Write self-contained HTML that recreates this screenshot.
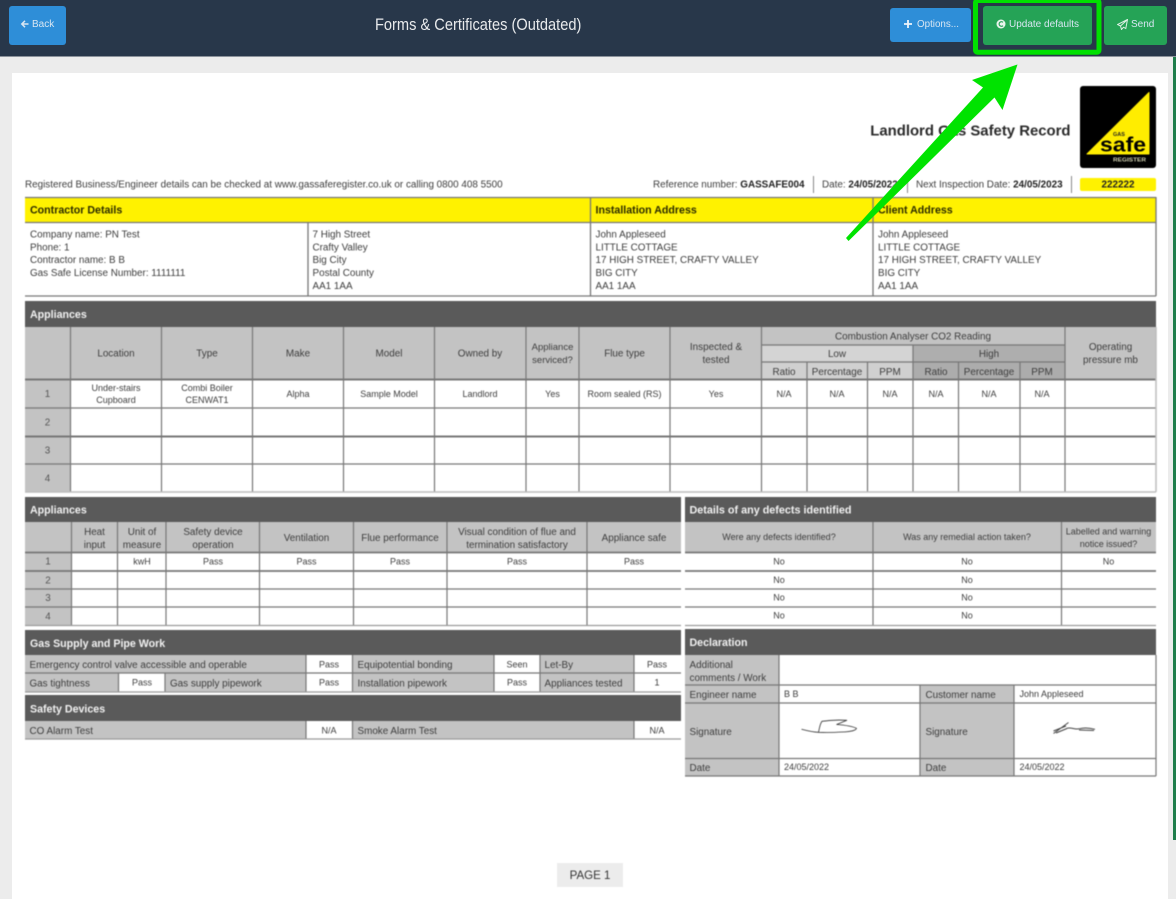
<!DOCTYPE html>
<html lang="en"><head><meta charset="utf-8"><title>Forms &amp; Certificates (Outdated)</title>
<style>
html,body{margin:0;padding:0;width:1176px;height:899px;overflow:hidden;background:#ececec;font-family:"Liberation Sans",sans-serif}
#top{position:absolute;left:0;top:0;width:1176px;height:56px;background:#28374a;border-bottom:1px solid #8b929b}
#title{position:absolute;left:375px;top:14px;width:206px;white-space:nowrap;color:#e8eaec;font-size:17px;line-height:21px;transform-origin:0 50%;transform:scaleX(.86);filter:blur(.25px)}
.btn{position:absolute;box-sizing:border-box;border-radius:3px;color:#d8e6f2;font-size:10px;line-height:12px;white-space:nowrap}
.btn svg{position:absolute}.btn span{position:absolute;top:12.5px;filter:blur(.25px)}
#page{position:absolute;left:12px;top:73px;width:1156px;height:826px;background:#fff}
#scroll{position:absolute;left:1173px;top:57px;width:2.5px;height:783px;background:#1f7d4b}
#form{position:absolute;left:0;top:0;filter:blur(.4px)}
#form text{font-family:"Liberation Sans",sans-serif;font-size:9.9px;fill:#3d3d3d}
#form .c{text-anchor:middle}
#form .s{font-size:9px}
#form .h{font-size:10.65px;font-weight:bold;fill:#f2f2f2}
#form .y{font-size:10.65px;font-weight:bold;fill:#2b2b00}
#form .b{font-weight:bold;fill:#222}
#form .n{fill:#555}
#over{position:absolute;left:0;top:0;pointer-events:none}
</style></head><body>
<div id="page"></div><div id="scroll"></div>
<svg id="form" width="1176" height="899" viewBox="0 0 1176 899" xmlns="http://www.w3.org/2000/svg">
<!-- title + logo -->
<text x="1070.5" y="135.5" text-anchor="end" style="font-size:14.9px;font-weight:bold;fill:#2a2a2a">Landlord Gas Safety Record</text>
<rect x="1080" y="86" width="76" height="82" rx="3" fill="#000"/>
<path d="M1149 92.500V154H1087Z" fill="#ffed00" stroke="#ffed00" stroke-width="1" stroke-linejoin="round"/>
<text x="1119" y="136" class="c" style="font-size:5.500px;font-weight:bold;fill:#222">GAS</text>
<text x="1123" y="151.500" class="c" textLength="46" lengthAdjust="spacingAndGlyphs" style="font-size:20px;font-weight:bold;fill:#000">safe</text>
<text x="1129.500" y="161.500" class="c" textLength="33" lengthAdjust="spacingAndGlyphs" style="font-size:5.500px;font-weight:bold;fill:#d0d0b0">REGISTER</text>
<!-- reference row -->
<text x="25" y="187.500">Registered Business/Engineer details can be checked at www.gassaferegister.co.uk or calling 0800 408 5500</text>
<text x="653" y="187.500">Reference number: <tspan style="font-weight:bold;fill:#222">GASSAFE004</tspan></text>
<text x="822" y="187.500">Date: <tspan style="font-weight:bold;fill:#222">24/05/2022</tspan></text>
<text x="916" y="187.500">Next Inspection Date: <tspan style="font-weight:bold;fill:#222">24/05/2023</tspan></text>
<path d="M813.500 176V193M907.500 176V193M1071.500 176V193" stroke="#8a8a8a" stroke-width="1"/>
<rect x="1080" y="178" width="76" height="13" rx="2" fill="#fff200"/>
<text x="1118" y="187.500" class="c" style="font-weight:bold;fill:#222">222222</text>
<!-- contractor block -->
<rect x="25" y="198" width="1131" height="24" fill="#fff200"/>
<path d="M25 197.500H1156M25 222.500H1156M25 296H1156M590.500 197V296M873 197V296M308 222V296M1156 197V296" stroke="#777" stroke-width="1.300" fill="none"/>
<text x="30" y="213.500" class="y">Contractor Details</text>
<text x="595.500" y="213.500" class="y">Installation Address</text>
<text x="878" y="213.500" class="y">Client Address</text>
<text x="30" y="237.500">Company name: PN Test</text>
<text x="30" y="250.500">Phone: 1</text>
<text x="30" y="263">Contractor name: B B</text>
<text x="30" y="276">Gas Safe License Number: 1111111</text>
<text x="312.500" y="237.500">7 High Street</text>
<text x="312.500" y="250.500">Crafty Valley</text>
<text x="312.500" y="263">Big City</text>
<text x="312.500" y="276">Postal County</text>
<text x="312.500" y="289">AA1 1AA</text>
<text x="595.500" y="237.500">John Appleseed</text>
<text x="595.500" y="250.500">LITTLE COTTAGE</text>
<text x="595.500" y="263">17 HIGH STREET, CRAFTY VALLEY</text>
<text x="595.500" y="276">BIG CITY</text>
<text x="595.500" y="289">AA1 1AA</text>
<text x="878" y="237.500">John Appleseed</text>
<text x="878" y="250.500">LITTLE COTTAGE</text>
<text x="878" y="263">17 HIGH STREET, CRAFTY VALLEY</text>
<text x="878" y="276">BIG CITY</text>
<text x="878" y="289">AA1 1AA</text>
<!-- appliances 1 -->
<rect x="25" y="301" width="1131" height="26" fill="#5a5a5a"/>
<text x="30" y="318" class="h">Appliances</text>
<rect x="25" y="327" width="1131" height="52" fill="#c3c3c3"/>
<rect x="25" y="379" width="45" height="113" fill="#c3c3c3"/>
<rect x="761" y="345" width="152" height="17" fill="#d4d4d4"/>
<rect x="761" y="362" width="152" height="17" fill="#d0d0d0"/>
<rect x="913" y="345" width="152" height="17" fill="#aeaeae"/>
<rect x="913" y="362" width="152" height="17" fill="#acacac"/>
<path d="M70.500 327V492M161.500 327V492M252.500 327V492M343.500 327V492M434.500 327V492M526 327V492M579 327V492M670 327V492M761.500 327V492M807 362V492M867.500 362V492M913 345V492M958.500 362V492M1020 362V492M1065 327V492M761 345H1065M761 362H1065M25 408H1156M25 464H1156" stroke="#777" stroke-width="1.200" fill="none"/>
<path d="M25 379.500H1156M25 436.500H1156" stroke="#777" stroke-width="2" fill="none"/>
<path d="M25 492H1156M1156 327V492" stroke="#bdbdbd" stroke-width="1.500" fill="none"/>
<text x="116" y="356.500" class="c">Location</text>
<text x="207" y="356.500" class="c">Type</text>
<text x="298" y="356.500" class="c">Make</text>
<text x="389" y="356.500" class="c">Model</text>
<text x="480" y="356.500" class="c">Owned by</text>
<text x="552.500" y="350" class="c" style="font-size:9.500px">Appliance</text>
<text x="552.500" y="363" class="c" style="font-size:9.500px">serviced?</text>
<text x="624.500" y="356.500" class="c">Flue type</text>
<text x="716" y="350" class="c">Inspected &amp;</text>
<text x="716" y="363" class="c">tested</text>
<text x="913" y="339.500" class="c">Combustion Analyser CO2 Reading</text>
<text x="837" y="357" class="c">Low</text>
<text x="989" y="357" class="c">High</text>
<text x="784" y="375" class="c">Ratio</text>
<text x="837" y="375" class="c">Percentage</text>
<text x="890" y="375" class="c">PPM</text>
<text x="936" y="375" class="c">Ratio</text>
<text x="989" y="375" class="c">Percentage</text>
<text x="1042" y="375" class="c">PPM</text>
<text x="1110.500" y="350" class="c">Operating</text>
<text x="1110.500" y="363" class="c">pressure mb</text>
<text x="47.500" y="397" class="c n">1</text>
<text x="47.500" y="425.500" class="c n">2</text>
<text x="47.500" y="453.500" class="c n">3</text>
<text x="47.500" y="481.500" class="c n">4</text>
<text x="116" y="391" class="c s">Under-stairs</text>
<text x="116" y="403" class="c s">Cupboard</text>
<text x="207" y="391" class="c s">Combi Boiler</text>
<text x="207" y="403" class="c s">CENWAT1</text>
<text x="298" y="397" class="c s">Alpha</text>
<text x="389" y="397" class="c s">Sample Model</text>
<text x="480" y="397" class="c s">Landlord</text>
<text x="552.500" y="397" class="c s">Yes</text>
<text x="624.500" y="397" class="c s">Room sealed (RS)</text>
<text x="716" y="397" class="c s">Yes</text>
<text x="784" y="397" class="c s">N/A</text>
<text x="837" y="397" class="c s">N/A</text>
<text x="890" y="397" class="c s">N/A</text>
<text x="936" y="397" class="c s">N/A</text>
<text x="989" y="397" class="c s">N/A</text>
<text x="1042" y="397" class="c s">N/A</text>
<!-- appliances 2 -->
<rect x="25" y="497" width="656" height="25" fill="#5a5a5a"/>
<text x="30" y="513.500" class="h">Appliances</text>
<rect x="25" y="522" width="656" height="30" fill="#c3c3c3"/>
<rect x="25" y="552" width="46.500" height="73" fill="#c3c3c3"/>
<path d="M71.500 522V625M117.500 522V625M166 522V625M259.500 522V625M353.500 522V625M447 522V625M587 522V625M25 589H681M25 607H681" stroke="#777" stroke-width="1.200" fill="none"/>
<path d="M25 552.500H681M25 571H681" stroke="#777" stroke-width="1.800" fill="none"/>
<path d="M25 625.500H681" stroke="#9a9a9a" stroke-width="1.200"/>
<text x="94.500" y="535" class="c">Heat</text><text x="94.500" y="548" class="c">input</text>
<text x="142" y="535" class="c">Unit of</text><text x="142" y="548" class="c">measure</text>
<text x="213" y="535" class="c">Safety device</text><text x="213" y="548" class="c">operation</text>
<text x="306.500" y="541" class="c">Ventilation</text>
<text x="400" y="541" class="c">Flue performance</text>
<text x="517" y="535" class="c">Visual condition of flue and</text><text x="517" y="548" class="c">termination satisfactory</text>
<text x="634" y="541" class="c">Appliance safe</text>
<text x="48" y="564.500" class="c n">1</text><text x="48" y="583.500" class="c n">2</text><text x="48" y="601" class="c n">3</text><text x="48" y="619.500" class="c n">4</text>
<text x="142" y="564.500" class="c s">kwH</text>
<text x="213" y="564.500" class="c s">Pass</text>
<text x="306.500" y="564.500" class="c s">Pass</text>
<text x="400" y="564.500" class="c s">Pass</text>
<text x="517" y="564.500" class="c s">Pass</text>
<text x="634" y="564.500" class="c s">Pass</text>
<!-- defects -->
<rect x="685" y="497" width="471" height="25" fill="#5a5a5a"/>
<text x="689.500" y="513.500" class="h" style="font-size:10.800px">Details of any defects identified</text>
<rect x="685" y="522" width="471" height="30" fill="#c3c3c3"/>
<path d="M873 522V625M1061.500 522V625M685 589H1156M685 607H1156" stroke="#777" stroke-width="1.200" fill="none"/>
<path d="M685 552.500H1156M685 571H1156" stroke="#777" stroke-width="1.800" fill="none"/>
<path d="M685 625.500H1156" stroke="#9a9a9a" stroke-width="1.200"/>
<text x="779" y="540" class="c s">Were any defects identified?</text>
<text x="967" y="540" class="c s">Was any remedial action taken?</text>
<text x="1108.500" y="534.500" class="c s">Labelled and warning</text>
<text x="1108.500" y="547" class="c s">notice issued?</text>
<text x="779" y="564.500" class="c s">No</text><text x="967" y="564.500" class="c s">No</text><text x="1108.500" y="564.500" class="c s">No</text>
<text x="779" y="583" class="c s">No</text><text x="967" y="583" class="c s">No</text>
<text x="779" y="600.500" class="c s">No</text><text x="967" y="600.500" class="c s">No</text>
<text x="779" y="618.500" class="c s">No</text><text x="967" y="618.500" class="c s">No</text>
<!-- gas supply -->
<rect x="25" y="630" width="656" height="25" fill="#5a5a5a"/>
<text x="30" y="647" class="h">Gas Supply and Pipe Work</text>
<rect x="25" y="655" width="656" height="37" fill="#c3c3c3"/>
<path d="M306 655h46.500v18H306ZM494 655h46v18h-46ZM634 655h47v18h-47ZM118.500 673.500h46.500v18h-46.500ZM306 673.500h46.500v18H306ZM494 673.500h46v18h-46ZM634 673.500h47v18h-47Z" fill="#fff"/>
<path d="M25 673H681M306 655V692M352.500 655V692M494 655V692M540 655V692M634 655V692M118.500 673V692M165 673V692" stroke="#777" stroke-width="1.200" fill="none"/>
<path d="M25 692H681" stroke="#9a9a9a" stroke-width="1.200"/>
<text x="29.500" y="668">Emergency control valve accessible and operable</text>
<text x="329" y="667.500" class="c s">Pass</text>
<text x="357.500" y="668">Equipotential bonding</text>
<text x="517" y="667.500" class="c s">Seen</text>
<text x="544.500" y="668">Let-By</text>
<text x="657" y="667.500" class="c s">Pass</text>
<text x="29.500" y="686.500">Gas tightness</text>
<text x="142" y="685.500" class="c s">Pass</text>
<text x="170" y="686.500">Gas supply pipework</text>
<text x="329" y="685.500" class="c s">Pass</text>
<text x="357.500" y="686.500">Installation pipework</text>
<text x="517" y="685.500" class="c s">Pass</text>
<text x="544.500" y="686.500">Appliances tested</text>
<text x="657" y="685.500" class="c s">1</text>
<!-- safety -->
<rect x="25" y="695" width="656" height="26" fill="#5a5a5a"/>
<text x="30" y="712.500" class="h">Safety Devices</text>
<rect x="25" y="721" width="656" height="18" fill="#c3c3c3"/>
<path d="M306 721h46.500v18H306ZM634 721h47v18h-47Z" fill="#fff"/>
<path d="M306 721V739M352.500 721V739M634 721V739" stroke="#777" stroke-width="1.200" fill="none"/>
<path d="M25 739H681" stroke="#9a9a9a" stroke-width="1.200"/>
<text x="29.500" y="734">CO Alarm Test</text>
<text x="329" y="733.500" class="c s">N/A</text>
<text x="357.500" y="734">Smoke Alarm Test</text>
<text x="657" y="733.500" class="c s">N/A</text>
<!-- declaration -->
<rect x="685" y="629" width="471" height="26" fill="#5a5a5a"/>
<text x="689.500" y="646" class="h">Declaration</text>
<path d="M685 655h94v121h-94ZM920 685h94v91h-94Z" fill="#c3c3c3"/>
<path d="M779 655V776M920 685V776M1014 685V776M685 685H1156M685 703H1156M685 758.500H1156M685 776H1156M1156 655V776" stroke="#777" stroke-width="1.200" fill="none"/>
<text x="689.500" y="668">Additional</text>
<text x="689.500" y="681">comments / Work</text>
<text x="689.500" y="698">Engineer name</text>
<text x="784" y="697" class="s">B B</text>
<text x="925.500" y="698">Customer name</text>
<text x="1019.500" y="697" class="s">John Appleseed</text>
<text x="689.500" y="735">Signature</text>
<text x="925.500" y="735">Signature</text>
<text x="689.500" y="771">Date</text>
<text x="784" y="770" class="s">24/05/2022</text>
<text x="925.500" y="771">Date</text>
<text x="1019.500" y="770" class="s">24/05/2022</text>
<path d="M801.500 729.300C808 731 813 732.300 818.500 732.300C819.500 728 820 723.500 822 721.300C829 720.200 839 719.800 847 720.300C843 722 839 723.500 836.500 724.500C843 725 852 726 856.500 728.300C856 730.500 850 731.800 842 732C834 732.500 825 732.600 818.500 732.300" fill="none" stroke="#333" stroke-width=".8"/>
<path d="M1053.500 733.500L1068.500 722.500M1053.500 731L1066 726M1056 733L1067 728.500M1066.500 728.300C1072 727 1074 729.800 1079 728.800C1084 727.500 1090 728 1095 729.300M1079 730L1094 730.500" fill="none" stroke="#444" stroke-width="1"/>
<!-- page tag -->
<rect x="557" y="863" width="66" height="24" fill="#ececec"/>
<text x="590" y="879" class="c" style="font-size:11.500px;fill:#333">PAGE 1</text>
</svg>
<div id="top">
  <div class="btn" style="left:9px;top:6px;width:57px;height:39px;background:#2e8ed8"><svg style="left:11px;top:13px" width="10" height="10" viewBox="0 0 10 10"><path d="M8.500 5H2M5 1.800L1.800 5L5 8.200" fill="none" stroke="#d8e6f2" stroke-width="1.500"/></svg><span style="left:23px">Back</span></div>
  <div id="title">Forms &amp; Certificates (Outdated)</div>
  <div class="btn" style="left:890px;top:8px;width:81px;height:34px;background:#2e8ed8"><svg style="left:13px;top:11px" width="10" height="10" viewBox="0 0 10 10"><path d="M5 1V9M1 5H9" fill="none" stroke="#eef4fa" stroke-width="1.800"/></svg><span style="left:27px;top:11px;font-size:9.800px">Options...</span></div>
  <div class="btn" style="left:983px;top:6px;width:109px;height:39px;background:#25a356"><svg style="left:13px;top:13px" width="10" height="10" viewBox="0 0 10 10"><circle cx="5" cy="5" r="4.500" fill="#e8f4ec"/><path d="M7 3.300A2.300 2.300 0 1 0 7 6.700" fill="none" stroke="#25a356" stroke-width="1.200"/></svg><span style="left:26px">Update defaults</span></div>
  <div class="btn" style="left:1104px;top:6px;width:63px;height:39px;background:#25a356"><svg style="left:13px;top:13px" width="11" height="11" viewBox="0 0 11 11"><path d="M10.500 .5L.5 5.500L3.500 7L4.500 10.500L6.500 8.200L8.800 9.500ZM10.500 .5L3.500 7" fill="none" stroke="#dff0e6" stroke-width="1"/></svg><span style="left:27px">Send</span></div>
</div>
<svg id="over" width="1176" height="899" viewBox="0 0 1176 899" xmlns="http://www.w3.org/2000/svg">
<rect x="975.500" y="0.500" width="123.500" height="51.700" rx="2" fill="none" stroke="#00e000" stroke-width="5"/>
<path d="M1017.500 64.500L972 80L983 87.500L846 238L848.500 241L994.500 97.500L1002.500 110Z" fill="#00e300"/>
</svg>
</body></html>
